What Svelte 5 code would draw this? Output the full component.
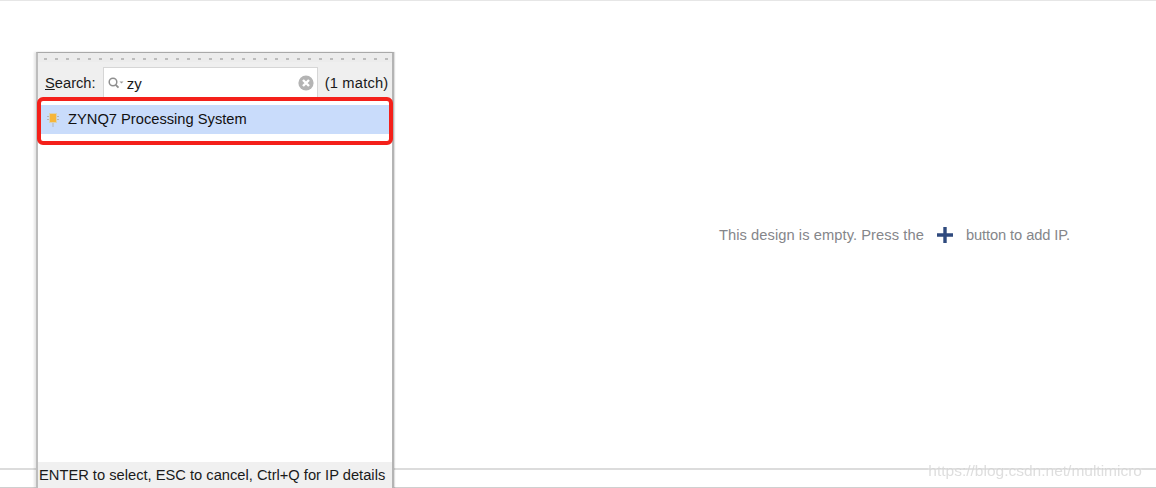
<script>
	let query = 'zy';
	const results = [{ name: 'ZYNQ7 Processing System' }];
</script>

<div class="page">
	<main class="canvas">
		<p class="empty">
			<span class="lead">This design is empty. Press the</span>
			<svg width="16" height="16" viewBox="0 0 16 16"><path d="M6.3 0h3.4v6.3H16v3.4H9.7V16H6.3V9.7H0V6.3h6.3z" fill="#2f4a7e" /></svg>
			<span class="tail">button to add IP.</span>
		</p>
	</main>
	<div class="tabbar"></div>

	<div class="popup">
		<div class="grip"></div>
		<div class="search">
			<span class="label"><u>S</u>earch:</span>
			<div class="field">
				<svg class="lens" width="16" height="14" viewBox="0 0 16 14">
					<circle cx="5" cy="6" r="3.8" fill="none" stroke="#8f8f8f" stroke-width="1.5" />
					<path d="M7.7 8.8l2.8 2.9" stroke="#8f8f8f" stroke-width="1.8" />
					<path d="M11.5 5.5h4l-2 2z" fill="#9a9a9a" />
				</svg>
				<span class="query">{query}</span>
				<svg class="clear" width="16" height="16" viewBox="0 0 16 16">
					<circle cx="8" cy="8" r="7.6" fill="#b4b4b4" />
					<path d="M5 5l6 6M11 5l-6 6" stroke="#fff" stroke-width="2.4" />
				</svg>
			</div>
			<span class="count">(1 match)</span>
		</div>
		<ul class="results">
			{#each results as item}
				<li class="result">
					<div class="row">
						<svg width="14" height="16" viewBox="0 0 14 16">
							<path d="M1 5.5h12M1 8.5h12M7 12v4" stroke="#b5b5b5" stroke-width="1" />
							<rect x="3.5" y="2.5" width="7" height="9" fill="#f7b63a" stroke="#d9d2b4" />
						</svg>
						<span>{item.name}</span>
					</div>
				</li>
			{/each}
		</ul>
		<div class="hint">ENTER to select, ESC to cancel, Ctrl+Q for IP details</div>
	</div>

	<div class="watermark">https://blog.csdn.net/multimicro</div>
</div>

<style>
	:global(body) {
		margin: 0;
		background: #fff;
	}

	.page {
		position: relative;
		width: 1156px;
		height: 488px;
		display: flex;
		flex-direction: column;
		box-sizing: border-box;
		border-top: 1px solid #e6e6e6;
		overflow: hidden;
		font-family: "Liberation Sans", Arial, sans-serif;
	}

	.canvas {
		flex: 1;
		display: flex;
		align-items: center;
		justify-content: center;
		padding-left: 633px;
	}

	.empty {
		display: flex;
		align-items: center;
		gap: 13px;
		margin: 0;
		font-size: 14.7px;
		color: #85868a;
		white-space: nowrap;
	}

	.lead {
		letter-spacing: 0.065px;
	}

	.tail {
		letter-spacing: -0.1px;
	}

	.tabbar {
		height: 20px;
		box-sizing: border-box;
		border-top: 2px solid #dcdcdc;
		border-bottom: 1px solid #cfcfcf;
	}

	.popup {
		position: absolute;
		left: 36px;
		top: 51px;
		bottom: 0;
		width: 358px;
		box-sizing: border-box;
		display: flex;
		flex-direction: column;
		background: #fff;
		border-top: 1px solid #a9a9a9;
		border-left: 2px solid #bdbdbd;
		border-right: 2px solid #b4b4b4;
		box-shadow: -2px 0 2px rgba(0, 0, 0, 0.1), 1px 0 1px rgba(0, 0, 0, 0.12);
	}

	.grip {
		height: 9px;
		background-color: #ececec;
		background-image: repeating-linear-gradient(90deg, #bcbcbc 0 3px, transparent 3px 11px);
		background-position: 6px 5px;
		background-size: 100% 2px;
		background-repeat: no-repeat;
	}

	.search {
		display: flex;
		align-items: center;
		height: 36px;
		box-sizing: border-box;
		padding: 5px 0 0 7px;
		background: #efefef;
		font-size: 14.7px;
		color: #1a1a1a;
	}

	.field {
		display: flex;
		align-items: center;
		width: 215px;
		height: 31px;
		box-sizing: border-box;
		margin-left: 7px;
		padding: 0 3px 0 4px;
		background: #fff;
		border: 1px solid #d6d6d6;
		border-bottom: 0;
	}

	.lens {
		flex: none;
	}

	.query {
		flex: 1;
		margin-left: 3px;
		font-size: 15px;
	}

	.count {
		margin-left: 7px;
		letter-spacing: 0.2px;
	}

	.results {
		flex: 1;
		margin: 0;
		padding: 0;
		list-style: none;
		background: #fff;
	}

	.result {
		height: 48px;
		margin: -1px -1px 0 -1px;
		box-sizing: border-box;
		padding: 4px 0 7px;
		border: 4px solid #f4201a;
		border-radius: 6px;
		background: #fff;
	}

	.row {
		display: flex;
		align-items: center;
		gap: 8px;
		height: 28px;
		padding: 0 0 1px 5px;
		background: #c9dcfb;
		font-size: 14.7px;
		color: #111;
	}

	.hint {
		height: 26px;
		box-sizing: border-box;
		padding: 5px 0 0 1px;
		background: #f0f0f0;
		font-size: 14.7px;
		color: #1a1a1a;
		white-space: nowrap;
	}

	.watermark {
		position: absolute;
		right: 14px;
		top: 461px;
		font-size: 15.5px;
		color: rgba(190, 190, 190, 0.5);
		text-shadow: 0 0 2px #fff;
		filter: blur(0.7px);
	}
</style>
